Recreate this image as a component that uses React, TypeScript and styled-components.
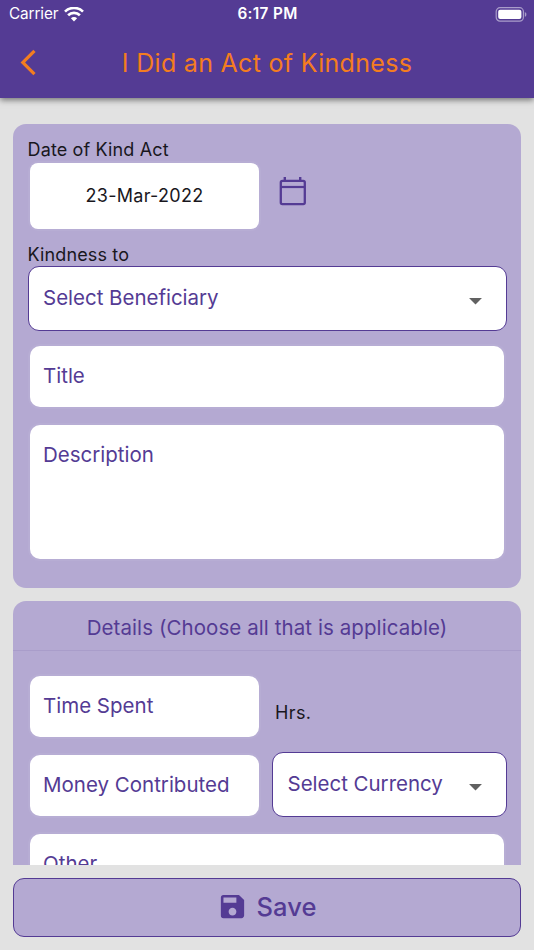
import React from 'react';
import styled, { createGlobalStyle } from 'styled-components';
import { MdArrowDropDown, MdSave } from 'react-icons/md';

const purple = '#543b94';
const lilac = '#b4a9d2';
const outline = '#b7add4';
const orange = '#f47d20';

const GlobalStyle = createGlobalStyle`
  * { box-sizing: border-box; }
  body {
    margin: 0;
    background: #e2e2e2;
    font-family: Inter, "Liberation Sans", sans-serif;
  }
  button { font-family: inherit; }
`;

const Screen = styled.div`
  height: 950px;
  display: flex;
  flex-direction: column;
  overflow: hidden;
  background: #e2e2e2;
`;

const Header = styled.header`
  flex: none;
  height: 98px;
  background: ${purple};
  box-shadow: 0 2px 6px rgba(0, 0, 0, 0.5);
  z-index: 1;
`;

const StatusBar = styled.div`
  height: 27px;
  padding: 0 7px 0 9px;
  display: grid;
  grid-template-columns: 1fr auto 1fr;
  align-items: center;
  color: #fff;
  font-size: 15.3px;
  line-height: 28px;
`;

const Carrier = styled.div`
  display: flex;
  align-items: center;
  gap: 6px;
  letter-spacing: -0.1px;
`;

const Clock = styled.div`
  margin-right: 1px;
  font-weight: 600;
  letter-spacing: 0.35px;
`;

const BatteryIcon = styled.svg`
  justify-self: end;
`;

const NavBar = styled.div`
  height: 71px;
  display: grid;
  grid-template-columns: 60px 1fr 60px;
  align-items: center;
`;

const BackButton = styled.button`
  display: flex;
  padding: 0 0 0 12.8px;
  border: 0;
  background: none;
  color: ${orange};
`;

const Title = styled.h1`
  margin: 0;
  text-align: center;
  color: ${orange};
  font-size: 25px;
  font-weight: 400;
  line-height: 32px;
  letter-spacing: 0.3px;
  white-space: nowrap;
`;

const Content = styled.main`
  height: 766.5px;
  flex: none;
  overflow: hidden;
  padding: 26px 13px 0;
  display: flex;
  flex-direction: column;
  gap: 13px;
`;

const Card = styled.section<{ $height: number }>`
  flex: none;
  height: ${({ $height }) => $height}px;
  border-radius: 13px;
  background: ${lilac};
`;

const FormBody = styled.div`
  padding: 13.5px 14.5px 0;
  display: flex;
  flex-direction: column;
`;

const Label = styled.label`
  color: #19171d;
  font-size: 18px;
  line-height: 24px;
  letter-spacing: 0.14px;
  white-space: nowrap;
`;

const DateRow = styled.div`
  display: flex;
  align-items: flex-start;
  gap: 20px;
  padding: 1.5px 2.5px 0;
  margin-bottom: 14px;
`;

const DateBox = styled.div`
  width: 229px;
  height: 65.5px;
  border-radius: 8px;
  background: #fff;
  box-shadow: 0 0 0 2px ${outline};
  color: #19171d;
  font-size: 18px;
  line-height: 65px;
  letter-spacing: 0.28px;
  text-align: center;
`;

const CalendarIcon = styled.svg`
  margin-top: 13px;
`;

const Field = styled.div<{ $height: number }>`
  height: ${({ $height }) => $height}px;
  padding: 14px 13px 0;
  border-radius: 10px;
  background: #fff;
  box-shadow: 0 0 0 2px ${outline};
  color: ${purple};
  font-size: 20.5px;
  line-height: 32px;
  letter-spacing: 0;
  white-space: nowrap;
`;

const Stack = styled.div`
  padding: 15.5px 2.5px 0;
  display: flex;
  flex-direction: column;
  gap: 18.5px;
`;

const Select = styled.div`
  height: 64.5px;
  margin-top: -0.5px;
  padding: 0 14px 0 14.5px;
  display: flex;
  align-items: center;
  justify-content: space-between;
  border: 1.3px solid ${purple};
  border-radius: 11px;
  background: #fff;
  color: ${purple};
  font-size: 20.5px;
  line-height: 32px;
  letter-spacing: -0.02px;
  white-space: nowrap;

  svg {
    color: #616161;
    margin: 5px 0.5px 0 0;
  }
`;

const CardHeading = styled.h2`
  height: 50px;
  margin: 0;
  border-bottom: 1px solid #a99dca;
  color: ${purple};
  font-size: 20.5px;
  font-weight: 400;
  line-height: 53px;
  letter-spacing: 0.08px;
  text-align: center;
`;

const DetailsGrid = styled.div`
  padding: 25px 14.5px 0 17px;
  display: grid;
  grid-template-columns: 229px 234.5px;
  column-gap: 13px;
`;

const GridCell = styled.div<{ $height: number; $top?: number }>`
  height: ${({ $height }) => $height}px;
  padding-top: ${({ $top = 0 }) => $top}px;
`;

const Unit = styled(Label)`
  display: block;
  padding: 25px 0 0 3px;
  letter-spacing: 0.4px;
`;

const WideCell = styled.div`
  grid-column: 1 / -1;
  padding-right: 2.5px;
`;

const Footer = styled.footer`
  padding: 13px 13px 0;
`;

const SaveButton = styled.button`
  width: 100%;
  height: 59.5px;
  display: flex;
  align-items: center;
  justify-content: center;
  gap: 8px;
  padding: 0 0 1px;
  border: 1.3px solid ${purple};
  border-radius: 11px;
  background: ${lilac};
  color: ${purple};
  font-size: 25.5px;
  font-weight: 500;
  letter-spacing: 0.1px;
`;

function Wifi() {
  return (
    <svg width="20" height="15" viewBox="0 0 20 15" fill="none" stroke="#fff" strokeWidth="2.7">
      <path d="M1 4.6a13 13 0 0 1 18 0" />
      <path d="M4.1 8.2a8.5 8.5 0 0 1 11.8 0" />
      <path d="M10 14.4l-3.1-3.2a4.4 4.4 0 0 1 6.2 0z" fill="#fff" stroke="none" />
    </svg>
  );
}

function Battery() {
  return (
    <BatteryIcon width="32" height="15" viewBox="0 0 32 15">
      <rect x="1.2" y="0.7" width="27.2" height="13.4" rx="3.8" fill="none" stroke="#a99dca" strokeWidth="1.2" />
      <rect x="3.2" y="2.7" width="23.2" height="9.4" rx="2" fill="#fff" />
      <path d="M29.8 5v4.8c1-.4 1.6-1.3 1.6-2.4s-.6-2-1.6-2.4z" fill="#a99dca" />
    </BatteryIcon>
  );
}

function BackArrow() {
  return (
    <svg width="31" height="31" viewBox="0 0 24 24" fill="currentColor">
      <path d="M17.51 3.87 15.73 2.1 5.84 12l9.9 9.9 1.77-1.77L9.38 12z" />
    </svg>
  );
}

function Calendar() {
  return (
    <CalendarIcon width="28" height="30" viewBox="0 0 28 30" fill="none" stroke={purple}>
      <rect x="1.8" y="4.8" width="24" height="23.4" rx="1.6" strokeWidth="2.3" />
      <path d="M2 11h24" strokeWidth="2.2" />
      <path d="M5.8 1v4M21.2 1v4" strokeWidth="2.4" />
    </CalendarIcon>
  );
}

export default function App() {
  return (
    <>
      <GlobalStyle />
      <Screen>
        <Header>
          <StatusBar>
            <Carrier>
              Carrier
              <Wifi />
            </Carrier>
            <Clock>6:17 PM</Clock>
            <Battery />
          </StatusBar>
          <NavBar>
            <BackButton aria-label="Back">
              <BackArrow />
            </BackButton>
            <Title>I Did an Act of Kindness</Title>
          </NavBar>
        </Header>

        <Content>
          <Card $height={464}>
            <FormBody>
              <Label>Date of Kind Act</Label>
              <DateRow>
                <DateBox>23-Mar-2022</DateBox>
                <Calendar />
              </DateRow>
              <Label>Kindness to</Label>
              <Select>
                Select Beneficiary
                <MdArrowDropDown size={31} />
              </Select>
              <Stack>
                <Field $height={60.5}>Title</Field>
                <Field $height={134}>Description</Field>
              </Stack>
            </FormBody>
          </Card>

          <Card $height={400}>
            <CardHeading>Details (Choose all that is applicable)</CardHeading>
            <DetailsGrid>
              <GridCell $height={76.5}>
                <Field $height={61}>Time Spent</Field>
              </GridCell>
              <Unit>Hrs.</Unit>
              <GridCell $height={81.5} $top={2.5}>
                <Field $height={61}>Money Contributed</Field>
              </GridCell>
              <Select>
                Select Currency
                <MdArrowDropDown size={31} />
              </Select>
              <WideCell>
                <Field $height={61}>Other</Field>
              </WideCell>
            </DetailsGrid>
          </Card>
        </Content>

        <Footer>
          <SaveButton>
            <MdSave size={31} />
            Save
          </SaveButton>
        </Footer>
      </Screen>
    </>
  );
}
